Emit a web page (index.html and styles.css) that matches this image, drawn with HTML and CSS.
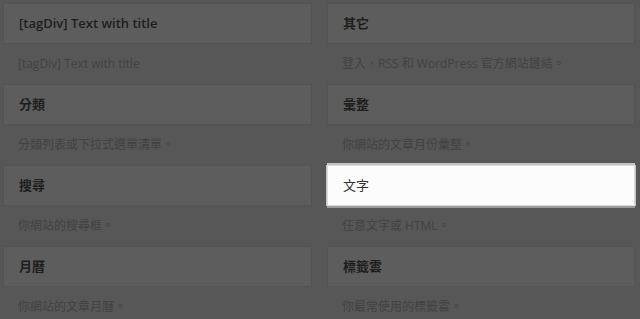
FILE: index.html
```html
<!DOCTYPE html>
<html>
    <head>
        <meta http-equiv="Content-Type" content="text/html; charset=utf-8">
        <title>可用小工具</title>
        <link rel="stylesheet" href="styles.css">
    </head>
    <body>
        <div class="widget-list">
            <div class="widget">
                <div class="widget-title">[tagDiv] Text with title</div>
                <div class="widget-desc">[tagDiv] Text with title</div>
            </div>
            <div class="widget">
                <div class="widget-title">其它</div>
                <div class="widget-desc">登入、RSS 和 WordPress 官方網站鏈結。</div>
            </div>
            <div class="widget">
                <div class="widget-title">分類</div>
                <div class="widget-desc">分類列表或下拉式選單清單。</div>
            </div>
            <div class="widget">
                <div class="widget-title">彙整</div>
                <div class="widget-desc">你網站的文章月份彙整。</div>
            </div>
            <div class="widget">
                <div class="widget-title">搜尋</div>
                <div class="widget-desc">你網站的搜尋框。</div>
            </div>
            <div class="widget">
                <div class="widget-title highlight">文字</div>
                <div class="widget-desc">任意文字或 HTML。</div>
            </div>
            <div class="widget">
                <div class="widget-title">月曆</div>
                <div class="widget-desc">你網站的文章月曆。</div>
            </div>
            <div class="widget">
                <div class="widget-title">標籤雲</div>
                <div class="widget-desc">你最常使用的標籤雲。</div>
            </div>
        </div>
    </body>
</html>
```

FILE: styles.css
```css
* {
    box-sizing: border-box;
}

body {
    margin: 0;
    background-color: #575757;
    font-family: "Open Sans", "Noto Sans CJK TC", sans-serif;
    font-size: 12px;
}

.widget-list {
    display: grid;
    grid-template-columns: 309px 308px;
    column-gap: 15px;
    padding: 3px 5px 0 3px;
}

.widget-title {
    height: 41px;
    line-height: 39px;
    padding: 0 15px;
    border: 1px solid #535353;
    background-color: #5d5d5d;
    color: #1e1e1e;
    font-weight: 600;
    font-size: 13px;
}

.widget-desc {
    height: 40px;
    line-height: 40px;
    padding: 0 15px;
    color: #424242;
}

.highlight {
    position: relative;
    background-color: #fcfcfc;
    border-color: #dcdcdc;
    color: #333;
    font-weight: 400;
    box-shadow: 0 -2px 0 #c4c4c4, 0 2px 0 #9a9a9a, -1px 0 0 #c4c4c4, 1px 0 0 #c4c4c4;
}
```
